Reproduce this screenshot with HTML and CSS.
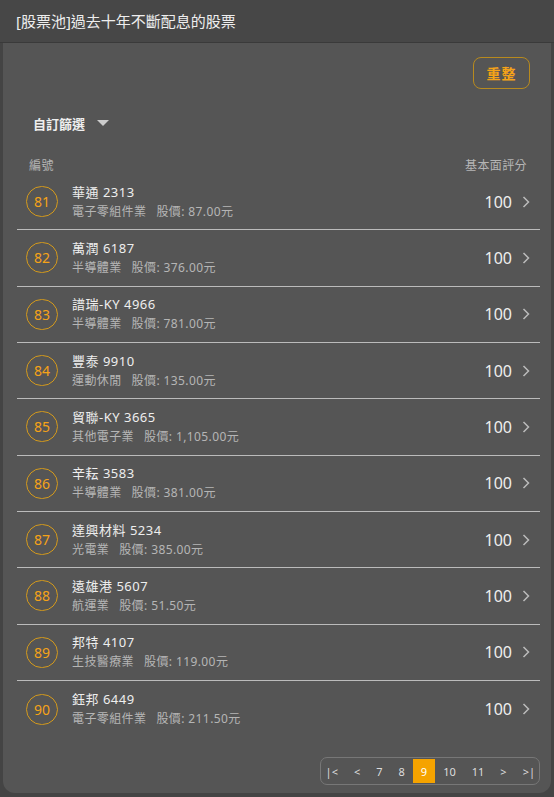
FILE: index.html
```html
<!DOCTYPE html>
<html lang="zh-Hant">
<head>
    <meta charset="UTF-8">
    <meta name="viewport" content="width=device-width, initial-scale=1.0">
    <title>股票池</title>
    <link rel="stylesheet" href="styles.css">
</head>
<body>
    <div class="modal">
        <div class="modal-header">[股票池]過去十年不斷配息的股票</div>

        <div class="modal-body">
            <div class="toolbar">
                <button class="btn-reset">重整</button>
            </div>

            <div class="filter">
                <span>自訂篩選</span>
                <span class="caret"></span>
            </div>

            <div class="list-head">
                <span>編號</span>
                <span>基本面評分</span>
            </div>

            <div class="stock-list">
                <div class="stock-row">
                    <div class="rank">81</div>
                    <div class="info">
                        <div class="name">華通 2313</div>
                        <div class="meta"><span class="industry">電子零組件業</span>股價: 87.00元</div>
                    </div>
                    <div class="score">100</div>
                    <div class="chev"><svg viewBox="0 0 8 12" width="8" height="12"><path d="M1.5 1 L6.5 6 L1.5 11" fill="none" stroke="#bbb" stroke-width="1.5"/></svg></div>
                </div>
                <div class="stock-row">
                    <div class="rank">82</div>
                    <div class="info">
                        <div class="name">萬潤 6187</div>
                        <div class="meta"><span class="industry">半導體業</span>股價: 376.00元</div>
                    </div>
                    <div class="score">100</div>
                    <div class="chev"><svg viewBox="0 0 8 12" width="8" height="12"><path d="M1.5 1 L6.5 6 L1.5 11" fill="none" stroke="#bbb" stroke-width="1.5"/></svg></div>
                </div>
                <div class="stock-row">
                    <div class="rank">83</div>
                    <div class="info">
                        <div class="name">譜瑞-KY 4966</div>
                        <div class="meta"><span class="industry">半導體業</span>股價: 781.00元</div>
                    </div>
                    <div class="score">100</div>
                    <div class="chev"><svg viewBox="0 0 8 12" width="8" height="12"><path d="M1.5 1 L6.5 6 L1.5 11" fill="none" stroke="#bbb" stroke-width="1.5"/></svg></div>
                </div>
                <div class="stock-row">
                    <div class="rank">84</div>
                    <div class="info">
                        <div class="name">豐泰 9910</div>
                        <div class="meta"><span class="industry">運動休閒</span>股價: 135.00元</div>
                    </div>
                    <div class="score">100</div>
                    <div class="chev"><svg viewBox="0 0 8 12" width="8" height="12"><path d="M1.5 1 L6.5 6 L1.5 11" fill="none" stroke="#bbb" stroke-width="1.5"/></svg></div>
                </div>
                <div class="stock-row">
                    <div class="rank">85</div>
                    <div class="info">
                        <div class="name">貿聯-KY 3665</div>
                        <div class="meta"><span class="industry">其他電子業</span>股價: 1,105.00元</div>
                    </div>
                    <div class="score">100</div>
                    <div class="chev"><svg viewBox="0 0 8 12" width="8" height="12"><path d="M1.5 1 L6.5 6 L1.5 11" fill="none" stroke="#bbb" stroke-width="1.5"/></svg></div>
                </div>
                <div class="stock-row">
                    <div class="rank">86</div>
                    <div class="info">
                        <div class="name">辛耘 3583</div>
                        <div class="meta"><span class="industry">半導體業</span>股價: 381.00元</div>
                    </div>
                    <div class="score">100</div>
                    <div class="chev"><svg viewBox="0 0 8 12" width="8" height="12"><path d="M1.5 1 L6.5 6 L1.5 11" fill="none" stroke="#bbb" stroke-width="1.5"/></svg></div>
                </div>
                <div class="stock-row">
                    <div class="rank">87</div>
                    <div class="info">
                        <div class="name">達興材料 5234</div>
                        <div class="meta"><span class="industry">光電業</span>股價: 385.00元</div>
                    </div>
                    <div class="score">100</div>
                    <div class="chev"><svg viewBox="0 0 8 12" width="8" height="12"><path d="M1.5 1 L6.5 6 L1.5 11" fill="none" stroke="#bbb" stroke-width="1.5"/></svg></div>
                </div>
                <div class="stock-row">
                    <div class="rank">88</div>
                    <div class="info">
                        <div class="name">遠雄港 5607</div>
                        <div class="meta"><span class="industry">航運業</span>股價: 51.50元</div>
                    </div>
                    <div class="score">100</div>
                    <div class="chev"><svg viewBox="0 0 8 12" width="8" height="12"><path d="M1.5 1 L6.5 6 L1.5 11" fill="none" stroke="#bbb" stroke-width="1.5"/></svg></div>
                </div>
                <div class="stock-row">
                    <div class="rank">89</div>
                    <div class="info">
                        <div class="name">邦特 4107</div>
                        <div class="meta"><span class="industry">生技醫療業</span>股價: 119.00元</div>
                    </div>
                    <div class="score">100</div>
                    <div class="chev"><svg viewBox="0 0 8 12" width="8" height="12"><path d="M1.5 1 L6.5 6 L1.5 11" fill="none" stroke="#bbb" stroke-width="1.5"/></svg></div>
                </div>
                <div class="stock-row">
                    <div class="rank">90</div>
                    <div class="info">
                        <div class="name">鈺邦 6449</div>
                        <div class="meta"><span class="industry">電子零組件業</span>股價: 211.50元</div>
                    </div>
                    <div class="score">100</div>
                    <div class="chev"><svg viewBox="0 0 8 12" width="8" height="12"><path d="M1.5 1 L6.5 6 L1.5 11" fill="none" stroke="#bbb" stroke-width="1.5"/></svg></div>
                </div>
            </div>

            <div class="pager-wrap">
                <div class="pager">
                    <span class="page first">|&lt;</span>
                    <span class="page">&lt;</span>
                    <span class="page">7</span>
                    <span class="page">8</span>
                    <span class="page active">9</span>
                    <span class="page">10</span>
                    <span class="page">11</span>
                    <span class="page">&gt;</span>
                    <span class="page last">&gt;|</span>
                </div>
            </div>
        </div>
    </div>
</body>
</html>
```

FILE: styles.css
```css
* {
    box-sizing: border-box;
}

body {
    margin: 0;
    background-color: #444;
    font-family: 'Noto Sans', 'Noto Sans CJK TC', sans-serif;
    color: #eee;
}

.modal {
    width: 554px;
    height: 797px;
}

.modal-header {
    height: 43px;
    padding-left: 16px;
    line-height: 42px;
    font-size: 15px;
    color: #eee;
    background-color: #474747;
    border-bottom: 1px solid #3a3a3a;
}

.modal-body {
    margin: 0 3px;
    height: 750px;
    background-color: #555;
    border-radius: 0 0 12px 12px;
    padding: 14px 11px 0 14px;
}

.toolbar {
    display: flex;
    justify-content: flex-end;
    padding-right: 10px;
}

.btn-reset {
    width: 57px;
    height: 32px;
    background: transparent;
    border: 1px solid #b88a1e;
    border-radius: 8px;
    color: #f5a318;
    font-family: 'Noto Sans CJK TC', sans-serif;
    font-size: 14px;
    font-weight: bold;
    letter-spacing: 1px;
    padding: 0;
}

.filter {
    display: flex;
    align-items: center;
    margin-top: 24px;
    padding-left: 16px;
    height: 20px;
    font-size: 13px;
    font-weight: bold;
    color: #eee;
}

.caret {
    width: 0;
    height: 0;
    margin-left: 12px;
    border-left: 6px solid transparent;
    border-right: 6px solid transparent;
    border-top: 6px solid #ccc;
}

.list-head {
    display: flex;
    justify-content: space-between;
    margin-top: 25px;
    padding: 0 13px 0 12px;
    font-size: 12px;
    color: #b5b5b5;
    height: 16px;
    line-height: 16px;
    letter-spacing: 0.4px;
}

.stock-row {
    display: flex;
    align-items: center;
    height: 56.33px;
    padding: 0 10px 0 9px;
    border-bottom: 1px solid #bbb;
}

.stock-row:last-child {
    border-bottom: none;
}

.rank {
    width: 32px;
    height: 31px;
    border: 1px solid #d49a1c;
    border-radius: 16px;
    display: flex;
    align-items: center;
    justify-content: center;
    font-size: 14px;
    color: #f5a318;
}

.info {
    flex: 1;
    margin-left: 14px;
}

.name {
    font-size: 13px;
    line-height: 18px;
    color: #eee;
    letter-spacing: 0.5px;
}

.meta {
    font-size: 12px;
    line-height: 18px;
    color: #b5b5b5;
    margin-top: 2px;
    letter-spacing: 0.4px;
}

.industry {
    margin-right: 10px;
}

.score {
    font-size: 16px;
    color: #eee;
}

.chev {
    display: flex;
    margin-left: 10px;
}

.pager-wrap {
    display: flex;
    justify-content: flex-end;
    margin-top: 20px;
}

.pager {
    display: flex;
    align-items: stretch;
    height: 28px;
    padding: 1px 0;
    border: 1px solid #777;
    border-radius: 7px;
    font-size: 11px;
    color: #ddd;
}

.page {
    display: flex;
    align-items: center;
    justify-content: center;
    padding: 0 8px;
}

.page.first {
    padding-left: 5px;
}

.page.last {
    padding-right: 4px;
}

.page.active {
    background-color: #f5a300;
    color: #fff;
}
```
